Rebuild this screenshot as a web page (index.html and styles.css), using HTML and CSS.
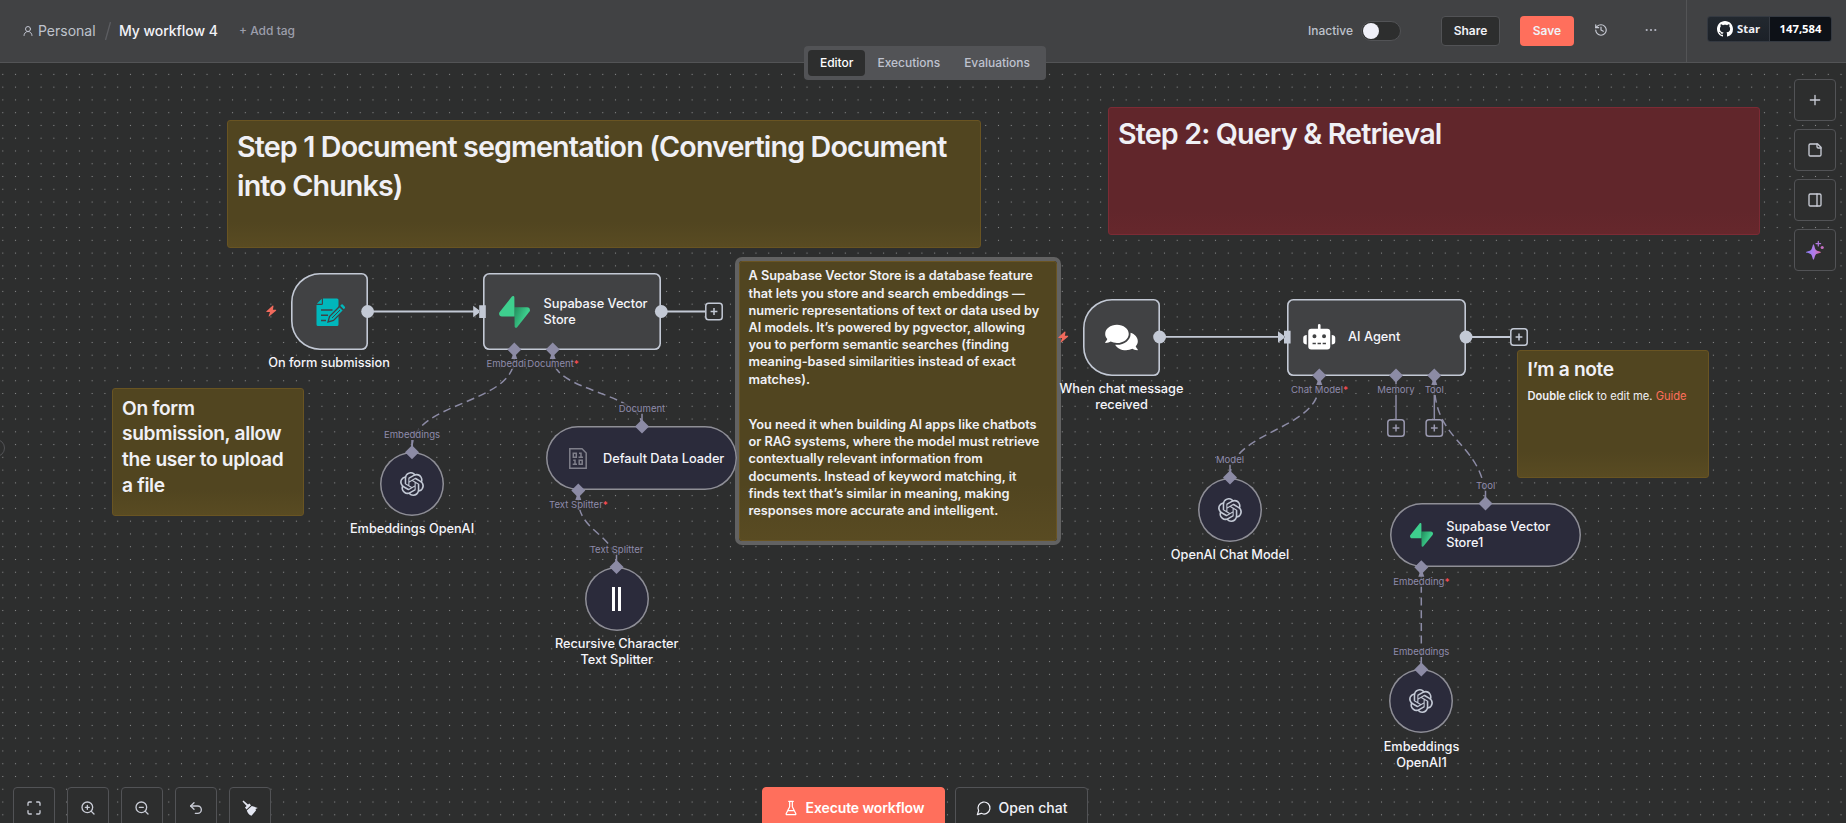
FILE: index.html
```html
<!DOCTYPE html>
<html lang="en">
<head>
<meta charset="utf-8">
<title>My workflow 4</title>
<link rel="stylesheet" href="styles.css">
</head>
<body>
<svg class="defs" width="0" height="0">
  <defs>
    <linearGradient id="supaShade" x1="53.97" y1="54.97" x2="94.16" y2="71.83" gradientUnits="userSpaceOnUse"><stop stop-color="#249361"/><stop offset="1" stop-color="#3ecf8e"/></linearGradient>
    <linearGradient id="aiShade" x1="0" y1="0" x2="1" y2="0"><stop stop-color="#8a7df5"/><stop offset=".55" stop-color="#b27be8"/><stop offset="1" stop-color="#d9689f"/></linearGradient>
    <symbol id="supabase" viewBox="0 0 109 113">
      <path fill="url(#supaShade)" d="M63.7076 110.284C60.8481 113.885 55.0502 111.912 54.9813 107.314L53.9738 40.0627L99.1935 40.0627C107.384 40.0627 111.952 49.5228 106.859 55.9374L63.7076 110.284Z"/>
      <path fill="#3ecf8e" d="M45.317 2.07103C48.1765 -1.53037 53.9745 0.442937 54.0434 5.041L54.4849 72.2922H9.83113C1.64038 72.2922 -2.92775 62.8321 2.1655 56.4175L45.317 2.07103Z"/>
    </symbol>
    <symbol id="openai" viewBox="0 0 24 24">
      <path fill="currentColor" d="M22.2819 9.8211a5.9847 5.9847 0 0 0-.5157-4.9108 6.0462 6.0462 0 0 0-6.5098-2.9A6.0651 6.0651 0 0 0 4.9807 4.1818a5.9847 5.9847 0 0 0-3.9977 2.9 6.0462 6.0462 0 0 0 .7427 7.0966 5.98 5.98 0 0 0 .511 4.9107 6.051 6.051 0 0 0 6.5146 2.9001A5.9847 5.9847 0 0 0 13.2599 24a6.0557 6.0557 0 0 0 5.7718-4.2058 5.9894 5.9894 0 0 0 3.9977-2.9001 6.0557 6.0557 0 0 0-.7475-7.0729zm-9.022 12.6081a4.4755 4.4755 0 0 1-2.8764-1.0408l.1419-.0804 4.7783-2.7582a.7948.7948 0 0 0 .3927-.6813v-6.7369l2.02 1.1686a.071.071 0 0 1 .038.052v5.5826a4.504 4.504 0 0 1-4.4945 4.4944zm-9.6607-4.1254a4.4708 4.4708 0 0 1-.5346-3.0137l.142.0852 4.783 2.7582a.7712.7712 0 0 0 .7806 0l5.8428-3.3685v2.3324a.0804.0804 0 0 1-.0332.0615L9.74 19.9502a4.4992 4.4992 0 0 1-6.1408-1.6464zM2.3408 7.8956a4.485 4.485 0 0 1 2.3655-1.9728V11.6a.7664.7664 0 0 0 .3879.6765l5.8144 3.3543-2.0201 1.1685a.0757.0757 0 0 1-.071 0l-4.8303-2.7865A4.504 4.504 0 0 1 2.3408 7.872zm16.5963 3.8558L13.1038 8.364 15.1192 7.2a.0757.0757 0 0 1 .071 0l4.8303 2.7913a4.4944 4.4944 0 0 1-.6765 8.1042v-5.6772a.79.79 0 0 0-.407-.667zm2.0107-3.0231l-.142-.0852-4.7735-2.7818a.7759.7759 0 0 0-.7854 0L9.409 9.2297V6.8974a.0662.0662 0 0 1 .0284-.0615l4.8303-2.7866a4.4992 4.4992 0 0 1 6.6802 4.66zM8.3065 12.863l-2.02-1.1638a.0804.0804 0 0 1-.038-.0567V6.0742a4.4992 4.4992 0 0 1 7.3757-3.4537l-.142.0805L8.704 5.459a.7948.7948 0 0 0-.3927.6813zm1.0976-2.3654l2.602-1.4998 2.6069 1.4998v2.9994l-2.5974 1.4997-2.6067-1.4997Z"/>
    </symbol>
    <symbol id="bolt" viewBox="0 0 12 12"><path fill="#f16a5c" d="M7.3 0 .5 6.3c-.3.4-.1.8.3.8h3.6L2.9 11.4c-.1.5.4.8.8.4l7.2-6.2c.4-.4.2-.9-.3-.9H7.5L8.2.6C8.3 0 7.7-.3 7.3 0Z"/></symbol>
  </defs>
</svg>

<div class="app">
  <header class="header">
    <div class="crumbs">
      <svg class="ico-user" viewBox="0 0 24 24"><circle cx="12" cy="8" r="5"/><path d="M20 21a8 8 0 0 0-16 0"/></svg>
      <span class="project">Personal</span>
      <svg class="slash" viewBox="0 0 6 18"><path d="M5.5 0 .5 18"/></svg>
      <span class="wf-name">My workflow 4</span>
      <span class="add-tag">+ Add tag</span>
    </div>
    <div class="actions">
      <span class="status">Inactive</span>
      <span class="toggle"><i></i></span>
      <button class="btn share">Share</button>
      <button class="btn save">Save</button>
      <svg class="ico-history" viewBox="0 0 24 24"><path d="M3 12a9 9 0 1 0 9-9 9.75 9.75 0 0 0-6.74 2.74L3 8"/><path d="M3 3v5h5"/><path d="M12 7v5l4 2"/></svg>
      <svg class="ico-more" viewBox="0 0 12 4"><circle cx="1.7" cy="2" r="1.1"/><circle cx="6" cy="2" r="1.1"/><circle cx="10.3" cy="2" r="1.1"/></svg>
      <div class="gh-wrap">
        <div class="gh">
          <span class="gh-star"><svg viewBox="0 0 16 16"><path d="M8 0C3.58 0 0 3.58 0 8c0 3.54 2.29 6.53 5.47 7.59.4.07.55-.17.55-.38 0-.19-.01-.82-.01-1.49-2.01.37-2.53-.49-2.69-.94-.09-.23-.48-.94-.82-1.13-.28-.15-.68-.52-.01-.53.63-.01 1.08.58 1.23.82.72 1.21 1.87.87 2.33.66.07-.52.28-.87.51-1.07-1.78-.2-3.64-.89-3.64-3.95 0-.87.31-1.59.82-2.15-.08-.2-.36-1.02.08-2.12 0 0 .67-.21 2.2.82.64-.18 1.32-.27 2-.27s1.36.09 2 .27c1.53-1.04 2.2-.82 2.2-.82.44 1.1.16 1.92.08 2.12.51.56.82 1.27.82 2.15 0 3.07-1.87 3.75-3.65 3.95.29.25.54.73.54 1.48 0 1.07-.01 1.93-.01 2.2 0 .21.15.46.55.38A8.01 8.01 0 0 0 16 8c0-4.42-3.58-8-8-8Z"/></svg>Star</span>
          <span class="gh-count">147,584</span>
        </div>
      </div>
    </div>
    <nav class="tabs"><span class="tab active">Editor</span><span class="tab">Executions</span><span class="tab">Evaluations</span></nav>
  </header>

  <main class="canvas">
    <section class="sticky s-step1"><h1>Step 1 Document segmentation (Converting Document<br>into Chunks)</h1></section>
    <section class="sticky red s-step2"><h1>Step 2: Query &amp; Retrieval</h1></section>
    <section class="sticky s-form"><h2>On form<br>submission, allow<br>the user to upload<br>a file</h2></section>
    <section class="sticky s-note"><h2>I’m a note</h2><p><b>Double click</b> to edit me. <a>Guide</a></p></section>
    <section class="sticky selected s-info">
      <h4>A Supabase Vector Store is a database feature<br>that lets you store and search embeddings —<br>numeric representations of text or data used by<br>AI models. It’s powered by pgvector, allowing<br>you to perform semantic searches (finding<br>meaning-based similarities instead of exact<br>matches).</h4>
      <h4>You need it when building AI apps like chatbots<br>or RAG systems, where the model must retrieve<br>contextually relevant information from<br>documents. Instead of keyword matching, it<br>finds text that’s similar in meaning, making<br>responses more accurate and intelligent.</h4>
    </section>

    <svg class="edges" viewBox="0 0 1846 823">
      <g class="main-edge">
        <path d="M367 311.5H474"/><path d="M661 311.5H705"/>
        <path d="M1160 336.8H1279"/><path d="M1466 337H1510"/>
      </g>
      <g class="sub-edge">
        <path d="M1396 376V419"/><path d="M1434.3 376V419"/>
        <path d="M412 452V440"/><path d="M642 426V413"/><path d="M616.5 567V553"/><path d="M1230 477V464"/><path d="M1485.5 503V490"/><path d="M1421.3 669V657"/>
      </g>
      <g class="sub-edge dashed">
        <path d="M412 448C412 401 514.3 405 514.3 358"/>
        <path d="M642 426C642 392 552.7 392 552.7 358"/>
        <path d="M616.5 567C616.5 533 578.3 533 578.3 499"/>
        <path d="M1230 477C1230 430 1319.3 431 1319.3 384"/>
        <path d="M1485.5 503C1485.5 443 1434.4 444 1434.4 384"/>
        <path d="M1421.3 669V576"/>
      </g>
    </svg>

    <!-- trigger: form -->
    <svg class="bolt b1"><use href="#bolt"/></svg>
    <div class="node trigger n-form">
      <svg class="ico-form" viewBox="0 0 29 28"><path fill="#00b7bc" d="M7 .5H21a1.5 1.5 0 0 1 1.5 1.5v24.500a1.500 1.500 0 0 1-1.500 1.500H2a1.500 1.500 0 0 1-1.500-1.500V7H5.500A1.500 1.500 0 0 0 7 5.500ZM.8 5.800 5.800.7V5.800Z"/><path stroke="#414244" stroke-width="1.500" d="M5 12H16.500M5 17.200H12M5 22.400H10"/><path fill="#00b7bc" stroke="#414244" stroke-width="1.300" d="M12 24 13.500 18.500 23.500 8.500 27.500 12.500 17.500 22.500Z"/><path fill="#00b7bc" d="m24.300 7.700 1.100-1.100a1 1 0 0 1 1.400 0l2 2.200a1 1 0 0 1 0 1.400l-1 1Z"/><path stroke="#414244" d="M16 20 24 12"/></svg>
    </div>
    <div class="name nm-form">On form submission</div>

    <!-- vector store -->
    <div class="node wide n-supa"><svg class="ico-supa"><use href="#supabase"/></svg><span>Supabase Vector<br>Store</span></div>

    <div class="sub circle n-emb"><svg class="ico-ai"><use href="#openai"/></svg></div>
    <div class="name nm-emb">Embeddings OpenAI</div>

    <div class="sub pill n-loader">
      <svg class="ico-bin" viewBox="0 0 18 21"><path d="M.8.8H13l4.200 4.200V20.200H.8Z"/><path d="M4.300 5.300h3v4h-3ZM10 5.300h2v4M9.500 9.300h4.500M4.200 12.200h1.800v4M3.700 16.200H8M10.200 12.200h3v4h-3Z"/></svg>
      <span>Default Data Loader</span>
    </div>

    <div class="sub circle n-split"><i class="bar"></i><i class="bar"></i></div>
    <div class="name nm-split">Recursive Character<br>Text Splitter</div>

    <!-- trigger: chat -->
    <svg class="bolt b2"><use href="#bolt"/></svg>
    <div class="node trigger n-chat">
      <svg class="ico-chat" viewBox="0 0 576 512"><path fill="#fff" d="M416 192c0-88.400-93.100-160-208-160S0 103.600 0 192c0 34.300 14.100 65.900 38 92-13.400 30.200-35.500 54.200-35.800 54.500-2.200 2.300-2.800 5.700-1.500 8.700S4.800 352 8 352c36.600 0 66.900-12.300 88.700-25 32.200 15.700 70.300 25 111.300 25 114.900 0 208-71.600 208-160zm122 220c23.900-26 38-57.700 38-92 0-66.900-53.500-124.200-129.300-148.100.9 6.600 1.300 13.300 1.300 20.100 0 105.900-107.700 192-240 192-10.800 0-21.300-.8-31.700-1.900C207.800 439.600 281.800 480 368 480c41 0 79.100-9.200 111.300-25 21.800 12.700 52.100 25 88.700 25 3.200 0 6.100-1.900 7.300-4.800 1.300-2.900.7-6.300-1.500-8.700-.3-.2-22.400-24.200-35.800-54.500z"/></svg>
    </div>
    <div class="name nm-chat">When chat message<br>received</div>

    <!-- agent -->
    <div class="node wide n-agent">
      <svg class="ico-robot" viewBox="0 0 32 26"><g fill="#fff"><path d="M14.700 5V1.300a1.300 1.300 0 0 1 2.600 0V5Z"/><path fill-rule="evenodd" d="M8 4.700H24a3 3 0 0 1 3 3V22.500a3 3 0 0 1-3 3H8a3 3 0 0 1-3-3V7.700a3 3 0 0 1 3-3ZM11.200 10.300a2 2 0 1 0 0 4 2 2 0 0 0 0-4Zm9.600 0a2 2 0 1 0 0 4 2 2 0 0 0 0-4ZM9.300 18.700v1.500h3.300v-1.500Zm5 0v1.500h3.400v-1.500Zm5.100 0v1.500h3.300v-1.500Z"/><path d="M3.500 11V20.600C1.500 20.600 0 19.600 0 17.800V13.800C0 12 1.500 11 3.500 11ZM28.500 11V20.600C30.500 20.600 32 19.600 32 17.800V13.800C32 12 30.500 11 28.500 11Z"/></g></svg>
      <span>AI Agent</span>
    </div>

    <div class="sub circle n-model"><svg class="ico-ai"><use href="#openai"/></svg></div>
    <div class="name nm-model">OpenAI Chat Model</div>

    <div class="sub pill n-store1"><svg class="ico-supa"><use href="#supabase"/></svg><span>Supabase Vector<br>Store1</span></div>
    <div class="sub circle n-emb1"><svg class="ico-ai"><use href="#openai"/></svg></div>
    <div class="name nm-emb1">Embeddings<br>OpenAI1</div>

    <div class="lbl l1">Embeddi</div>
    <div class="lbl l2">Document<em>*</em></div>
    <div class="lbl mid l3">Embeddings</div>
    <div class="lbl mid l4">Document</div>
    <div class="lbl l5">Text Splitter<em>*</em></div>
    <div class="lbl mid l6">Text Splitter</div>
    <div class="lbl l7">Chat Model<em>*</em></div>
    <div class="lbl mid l8">Memory</div>
    <div class="lbl mid l9">Tool</div>
    <div class="lbl mid l10">Model</div>
    <div class="lbl mid l11">Tool</div>
    <div class="lbl l12">Embedding<em>*</em></div>
    <div class="lbl mid l13">Embeddings</div>

    <svg class="handles" viewBox="0 0 1846 823">
      <defs>
        <path id="dia" d="M0-7 7 0 0 7-7 0Z"/>
        <path id="diaIn" d="M0-7 7 0 1.600 5.400 3 9.500H-3L-1.600 5.400-7 0Z"/>
        <g id="plus"><rect x="-8.200" y="-8.200" width="16.400" height="16.400" rx="2.800"/><path d="M-3.400 0H3.400M0-3.400V3.400"/></g>
      </defs>
      <g class="dot">
        <circle cx="367.600" cy="311.500" r="6.400"/><circle cx="661.300" cy="311.500" r="6.400"/><circle cx="1159.600" cy="337" r="6.400"/><circle cx="1466" cy="337" r="6.400"/>
        <path d="M473.200 305.800V317.200L479.500 312.500V310.500ZM479.200 305.200h6.600v12.800h-6.600Z"/>
        <path d="M1278 331.300V342.700L1284.300 338V336ZM1284 330.700h6.600v12.800h-6.600Z"/>
      </g>
      <g class="dia">
        <use href="#diaIn" x="514.300" y="349.600"/><use href="#diaIn" x="552.700" y="349.600"/>
        <use href="#dia" x="412" y="452.300"/><use href="#dia" x="642" y="426.600"/>
        <use href="#diaIn" x="578.300" y="490.500"/><use href="#dia" x="616.500" y="567"/>
        <use href="#diaIn" x="1319.300" y="375.500"/><use href="#dia" x="1396" y="375.500"/><use href="#diaIn" x="1434.300" y="375.500"/>
        <use href="#dia" x="1230" y="477.500"/><use href="#dia" x="1485.500" y="503.500"/>
        <use href="#diaIn" x="1421.300" y="567.300"/><use href="#dia" x="1421.300" y="669.500"/>
      </g>
      <g class="plus-main"><use href="#plus" x="714" y="311.500"/><use href="#plus" x="1519" y="337"/></g>
      <g class="plus-sub"><use href="#plus" x="1396" y="428"/><use href="#plus" x="1434.300" y="428"/></g>
    </svg>

    <span class="collapse"></span>

    <aside class="side">
      <button class="sq"><svg viewBox="0 0 24 24"><path d="M5 12h14M12 5v14"/></svg></button>
      <button class="sq"><svg viewBox="0 0 24 24"><path d="M16 3H5a2 2 0 0 0-2 2v14a2 2 0 0 0 2 2h14a2 2 0 0 0 2-2V8Z"/><path d="M15 3v4a2 2 0 0 0 2 2h4"/></svg></button>
      <button class="sq"><svg viewBox="0 0 24 24"><rect x="3" y="3" width="18" height="18" rx="2"/><path d="M15 3v18"/></svg></button>
      <button class="sq"><svg class="spark" viewBox="0 0 18 19"><g fill="url(#aiShade)"><path d="M7.500 3.200C8.300 3.200 8.600 7 9.800 8.700S15 10.400 15 11.200 11 12 9.800 13.600 8.300 18.800 7.500 18.800 6.400 15.400 5.200 13.600 0 12 0 11.200 4 10.300 5.200 8.700 6.700 3.200 7.500 3.200Z"/></g><path stroke="#b178e0" stroke-width="1.200" d="M12.300.3v4.600M10 2.600h4.600"/><circle cx="16.200" cy="6.500" r="1.600" fill="#c46fc0"/></svg></button>
    </aside>

    <div class="controls">
      <button class="sq"><svg viewBox="0 0 24 24"><path d="M8 3H5a2 2 0 0 0-2 2v3M21 8V5a2 2 0 0 0-2-2h-3M3 16v3a2 2 0 0 0 2 2h3M16 21h3a2 2 0 0 0 2-2v-3"/></svg></button>
      <button class="sq"><svg viewBox="0 0 24 24"><circle cx="11" cy="11" r="8"/><path d="m21 21-4.350-4.350M11 8v6M8 11h6"/></svg></button>
      <button class="sq"><svg viewBox="0 0 24 24"><circle cx="11" cy="11" r="8"/><path d="m21 21-4.350-4.350M8 11h6"/></svg></button>
      <button class="sq"><svg viewBox="0 0 24 24"><path d="M9 14 4 9l5-5"/><path d="M4 9h10.500a5.500 5.500 0 0 1 0 11H11"/></svg></button>
      <button class="sq"><svg class="broom" viewBox="0 0 16 16"><path d="M.5 1.400 1.400.5 6 4.600 7.300 3.600 9 5.300 4.500 9.500 3 7.600 4.600 6ZM9.800 5.900 15.800 7.900 13.600 9 14 10.400 9.500 15.800C7 15.200 5.600 12.800 4.800 10.500Z"/></svg></button>
    </div>

    <div class="run">
      <button class="execute"><svg viewBox="0 0 24 24"><path d="M10 2v7.500a2 2 0 0 1-.2.900L4.700 20.600A1 1 0 0 0 5.600 22h12.800a1 1 0 0 0 .9-1.400L14.200 10.400a2 2 0 0 1-.2-.9V2M8.500 2h7M7 16h10"/></svg>Execute workflow</button>
      <button class="open-chat"><svg viewBox="0 0 24 24"><path d="M7.900 20A9 9 0 1 0 4 16.100L2 22Z"/></svg>Open chat</button>
    </div>
  </main>
</div>
</body>
</html>
```

FILE: styles.css
```css
* { box-sizing: border-box; }
body { margin: 0; overflow: hidden; background: #2d2e2e; font-family: Inter, "Open Sans", sans-serif; color: #f0f0f5; }
button { font-family: inherit; margin: 0; padding: 0; }
h1, h2, h4, p { margin: 0; }
svg { display: block; fill: none; overflow: visible; }
.defs { position: absolute; }
.app { position: relative; width: 1846px; height: 823px; overflow: hidden; display: flex; flex-direction: column; }

/* header */
.header { position: relative; z-index: 3; flex: none; height: 63px; background: #414244; border-bottom: 1px solid #535456; display: flex; justify-content: space-between; }
.crumbs { display: flex; align-items: center; height: 61px; padding-left: 22px; font-size: 14px; }
.ico-user { width: 12px; height: 12px; stroke: #c0c3cf; stroke-width: 2; stroke-linecap: round; }
.project { margin-left: 4px; width: 67px; color: #bfc2cc; }
.slash { width: 6px; height: 18px; stroke: #5c5d61; stroke-width: 1.3; }
.wf-name { margin-left: 8px; width: 120px; color: #f2f3f8; font-weight: 500; letter-spacing: -.05px; }
.add-tag { font-size: 12px; font-weight: 500; color: #9c9eab; }
.actions { display: flex; align-items: center; height: 62px; padding-bottom: 1px; }
.status { width: 54px; font-size: 12px; font-weight: 500; color: #bfc2cc; }
.toggle { width: 40px; height: 20px; border-radius: 10px; background: #2d2e2e; border: 1px solid #525356; padding: 1px; margin: 0 40px 0 -1px; }
.toggle i { display: block; width: 16px; height: 16px; border-radius: 50%; background: #f0f0f8; }
.btn { height: 30px; border-radius: 4px; font-size: 12px; font-weight: 600; color: #f0f1f6; }
.share { width: 59px; background: #2d2e2e; border: 1px solid #525356; margin-right: 20px; }
.save { width: 54px; background: #ff6f5c; border: 0; margin-right: 20px; }
.btn { padding-bottom: 1px; }
.ico-history { width: 14px; height: 14px; stroke: #c9ccd6; stroke-width: 2; stroke-linecap: round; stroke-linejoin: round; margin: 0 37px 2px 0; }
.ico-more { width: 12px; height: 4px; fill: #b4b6c2; margin: 0 29px 1px 0; }
.gh-wrap { height: 62px; margin-bottom: -1px; border-left: 1px solid #535456; padding: 16px 14px 0 20px; }
.gh { display: flex; height: 26px; border: 1px solid #343941; border-radius: 3px; overflow: hidden; font: 700 11.300px/24px "Open Sans", sans-serif; }
.gh-star { display: flex; align-items: center; gap: 4px; width: 62px; padding-left: 9px; background: linear-gradient(#22282f, #1c2128); border-right: 1px solid #343941; }
.gh-star svg { width: 16px; height: 16px; fill: #fff; }
.gh-count { width: 61px; text-align: center; background: #0d1117; color: #fff; }
.tabs { position: absolute; left: 804px; top: 46px; display: flex; padding: 4px; height: 34px; background: #525356; border-radius: 4px; }
.tab { height: 26px; padding: 0 12px; border-radius: 4px; font-size: 12px; line-height: 26px; font-weight: 500; color: #bfc2cf; letter-spacing: -.02px; }
.tab.active { background: #2d2e2e; color: #fff; }

/* canvas */
.canvas { position: absolute; inset: 0; background: radial-gradient(circle at 50% 50%, #8b8c8d 0, #858687 .5px, transparent 1px) -3.600px -8.600px / 12.770px 12.770px #2d2e2e; }
.canvas > * { position: absolute; }
.edges, .handles { left: 0; top: 0; width: 1846px; height: 823px; }
.main-edge { stroke: #c3c9d5; stroke-width: 1.800; }
.sub-edge { stroke: #8c8ba5; stroke-width: 1.500; }
.dashed { stroke-dasharray: 8 4.700; }
.dot { fill: #c3c9d5; }
.dia { fill: #8c8ba5; }
.plus-main, .plus-sub { fill: #2d2e2e; stroke-width: 1.500; }
.plus-main { stroke: #c3c9d5; }
.plus-sub { stroke: #9a99b0; }

.sticky { background: linear-gradient(#514520 80%, #594b22); border: 1px solid #695422; border-radius: 3px; padding: 5.500px 9px; color: #f0f0f5; white-space: nowrap; }
.sticky.red { background: linear-gradient(#61262b 80%, #66272c); border-color: #7c2b35; }
.sticky h1 { font-size: 28.700px; line-height: 39px; font-weight: 600; letter-spacing: -.880px; }
.sticky h2 { font-size: 19.150px; line-height: 25.850px; font-weight: 600; letter-spacing: -.320px; }
.sticky h4 { font-size: 12.770px; line-height: 17.240px; font-weight: 600; letter-spacing: -.040px; }
.sticky h4 + h4 { margin-top: 28px; }
.sticky p { font-size: 11.170px; line-height: 15px; margin-top: 6px; }
.sticky b { font-weight: 600; }
.sticky a { color: #ff6f5c; }
.selected { box-shadow: 0 0 0 4px #626262; }
.s-step1 { left: 227px; top: 120px; width: 754px; height: 128px; }
.s-step2 { left: 1108px; top: 107px; width: 652px; height: 128px; }
.s-form { left: 112px; top: 388px; width: 192px; height: 128px; padding: 6.500px 9px; }
.s-note { left: 1517px; top: 350px; width: 192px; height: 128px; padding: 6px 9.500px; }
.s-info { left: 739px; top: 261px; width: 318px; height: 280px; padding: 5.300px 8.500px; }

.node { display: flex; align-items: center; height: 77px; padding: 1px; background: #414244; box-shadow: inset 0 0 0 1.600px #c3c9d5; border-radius: 6.400px; }
.trigger { width: 77px; border-radius: 29px 6.400px 6.400px 29px; justify-content: center; }
.wide { width: 178.500px; }
.wide span, .pill span { font-size: 12.770px; line-height: 16px; font-weight: 500; white-space: nowrap; color: #f5f5fa; letter-spacing: -.020px; }
.sub { display: flex; align-items: center; padding: 1px; background: #2b2b3b; box-shadow: inset 0 0 0 1.500px #8f8f96; height: 64px; border-radius: 32px; }
.circle { width: 64px; justify-content: center; }
.pill { width: 191px; }
.n-form { left: 290.700px; top: 273px; }
.n-supa { left: 482.500px; top: 273px; }
.n-chat { left: 1082.700px; top: 298.500px; }
.n-agent { left: 1287.300px; top: 298.500px; }
.n-emb { left: 380px; top: 452.300px; }
.n-loader { left: 546.300px; top: 426.300px; }
.n-split { left: 584.700px; top: 567.200px; gap: 2.500px; }
.n-model { left: 1198px; top: 477.700px; }
.n-store1 { left: 1389.700px; top: 503.300px; }
.n-emb1 { left: 1389.300px; top: 669.300px; }
.ico-form { width: 29px; height: 28px; margin-left: 2px; }
.ico-chat { width: 33px; height: 29px; }
.n-supa .ico-supa { width: 31px; height: 32px; margin: 0 14px 0 15px; }
.n-store1 .ico-supa { width: 23px; height: 24px; margin: 0 13.500px 0 19px; }
.ico-robot { width: 32.500px; height: 26px; margin: 0 12.800px 0 14.500px; }
.ico-ai { width: 24px; height: 24px; color: #c3c9d5; }
.ico-bin { width: 18px; height: 21px; margin: 0 16.300px 0 21.500px; stroke: #7f7f8a; stroke-width: 1.500; }
.n-loader span { padding-top: 1px; }
.bar { width: 3.500px; height: 24px; background: #fff; }
.bolt { width: 11px; height: 12px; }
.b1 { left: 266.300px; top: 305px; }
.b2 { left: 1058px; top: 330.500px; }

.name { transform: translateX(-50%); font-size: 12.770px; line-height: 16px; font-weight: 500; text-align: center; white-space: nowrap; color: #f5f5fa; letter-spacing: -.030px; }
.nm-form { left: 329px; top: 354.500px; }
.nm-emb { left: 412px; top: 520.500px; }
.nm-split { left: 616.700px; top: 635.500px; }
.nm-chat { left: 1121.500px; top: 380.700px; }
.nm-model { left: 1230px; top: 546.500px; }
.nm-emb1 { left: 1421.500px; top: 738.500px; }

.lbl { font-size: 9.570px; line-height: 11px; white-space: nowrap; color: #8d8bab; background: rgba(45, 46, 46, .75); }
.lbl.mid { transform: translateX(-50%); }
.lbl em { font-style: normal; font-weight: 600; color: #ff4d55; }
.l1 { left: 486.500px; top: 358.200px; }
.l2 { left: 527.300px; top: 358.200px; }
.l3 { left: 412px; top: 429.200px; }
.l4 { left: 642px; top: 403.200px; }
.l5 { left: 549px; top: 499.200px; }
.l6 { left: 616.500px; top: 544.200px; }
.l7 { left: 1291px; top: 384.200px; }
.l8 { left: 1396px; top: 384.200px; }
.l9 { left: 1434.300px; top: 384.200px; }
.l10 { left: 1230px; top: 454.200px; }
.l11 { left: 1485.700px; top: 480.200px; }
.l12 { left: 1393.300px; top: 576.200px; }
.l13 { left: 1421.300px; top: 646.200px; }

.collapse { left: -13px; top: 439px; width: 18px; height: 18px; border: 1px solid #525356; border-radius: 50%; background: #2d2e2e; }

/* tool buttons */
.sq { width: 42px; height: 42px; flex: none; display: flex; align-items: center; justify-content: center; background: #2d2e2e; border: 1px solid #525356; border-radius: 4px; }
.sq svg { width: 16px; height: 16px; stroke: #c9ccd6; stroke-width: 2; stroke-linecap: round; stroke-linejoin: round; }
.sq .spark { width: 18px; height: 19px; stroke: none; }
.sq .broom { stroke: none; fill: #e4e7f2; }
.side { left: 1794px; top: 79px; display: flex; flex-direction: column; gap: 8px; }
.controls { left: 13px; top: 787px; display: flex; gap: 12px; }
.run { left: 762px; top: 787px; display: flex; gap: 10px; }
.run button { height: 42px; padding-bottom: 1px; display: flex; align-items: center; justify-content: center; gap: 7px; border-radius: 4px; font-size: 14px; font-weight: 500; color: #f0f1f8; background: #2d2e2e; border: 1px solid #525356; }
.run svg { width: 16px; height: 16px; stroke: currentColor; stroke-width: 1.800; stroke-linecap: round; stroke-linejoin: round; }
.run .execute { width: 183px; background: #ff6f5c; border-color: #ff6f5c; color: #fff; font-weight: 600; letter-spacing: -.120px; }
.run .open-chat { width: 133px; }
```
